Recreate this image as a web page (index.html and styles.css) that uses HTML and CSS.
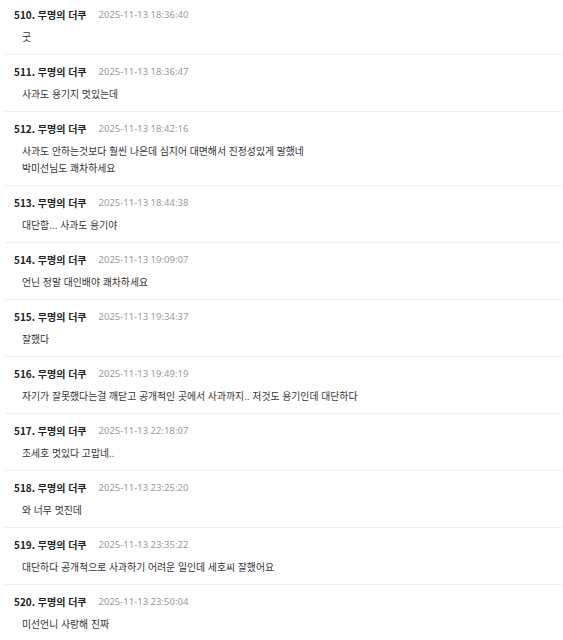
FILE: index.html
```html
<!DOCTYPE html>
<html lang="ko">
<head>
    <meta charset="utf-8">
    <title>댓글</title>
    <link rel="stylesheet" href="styles.css">
</head>
<body>
    <ul class="comments">
        <li class="comment">
            <div class="meta"><span class="author">510. 무명의 더쿠</span><span class="date">2025-11-13 18:36:40</span></div>
            <div class="text">굿</div>
        </li>
        <li class="comment">
            <div class="meta"><span class="author">511. 무명의 더쿠</span><span class="date">2025-11-13 18:36:47</span></div>
            <div class="text">사과도 용기지 멋있는데</div>
        </li>
        <li class="comment">
            <div class="meta"><span class="author">512. 무명의 더쿠</span><span class="date">2025-11-13 18:42:16</span></div>
            <div class="text">사과도 안하는것보다 훨씬 나은데 심지어 대면해서 진정성있게 말했네<br>박미선님도 쾌차하세요</div>
        </li>
        <li class="comment">
            <div class="meta"><span class="author">513. 무명의 더쿠</span><span class="date">2025-11-13 18:44:38</span></div>
            <div class="text">대단함... 사과도 용기야</div>
        </li>
        <li class="comment">
            <div class="meta"><span class="author">514. 무명의 더쿠</span><span class="date">2025-11-13 19:09:07</span></div>
            <div class="text">언닌 정말 대인배야 쾌차하세요</div>
        </li>
        <li class="comment">
            <div class="meta"><span class="author">515. 무명의 더쿠</span><span class="date">2025-11-13 19:34:37</span></div>
            <div class="text">잘했다</div>
        </li>
        <li class="comment">
            <div class="meta"><span class="author">516. 무명의 더쿠</span><span class="date">2025-11-13 19:49:19</span></div>
            <div class="text">자기가 잘못했다는걸 깨닫고 공개적인 곳에서 사과까지.. 저것도 용기인데 대단하다</div>
        </li>
        <li class="comment">
            <div class="meta"><span class="author">517. 무명의 더쿠</span><span class="date">2025-11-13 22:18:07</span></div>
            <div class="text">조세호 멋있다 고맙네..</div>
        </li>
        <li class="comment">
            <div class="meta"><span class="author">518. 무명의 더쿠</span><span class="date">2025-11-13 23:25:20</span></div>
            <div class="text">와 너무 멋진데</div>
        </li>
        <li class="comment">
            <div class="meta"><span class="author">519. 무명의 더쿠</span><span class="date">2025-11-13 23:35:22</span></div>
            <div class="text">대단하다 공개적으로 사과하기 어려운 일인데 세호씨 잘했어요</div>
        </li>
        <li class="comment">
            <div class="meta"><span class="author">520. 무명의 더쿠</span><span class="date">2025-11-13 23:50:04</span></div>
            <div class="text">미선언니 사랑해 진짜</div>
        </li>
    </ul>
</body>
</html>
```

FILE: styles.css
```css
body
{
    margin: 0;
    background-color: #fff;
    font-family: "Noto Sans CJK KR", "Noto Sans", sans-serif;
    color: #333;
}
.comments
{
    list-style: none;
    margin: -2px 1px 0 5px;
    padding: 0;
}
.comment
{
    padding: 9px 0 8px 0;
    border-bottom: 1px solid #efefef;
}
.meta
{
    display: flex;
    align-items: center;
    gap: 12px;
    height: 16px;
    padding-left: 9px;
}
.author
{
    font-size: 10px;
    font-weight: bold;
    line-height: 16px;
    color: #222;
}
.date
{
    font-family: "Noto Sans", "Liberation Sans", sans-serif;
    font-size: 9.5px;
    line-height: 16px;
    color: #999;
}
.text
{
    margin-top: 6px;
    padding-left: 17px;
    font-size: 9.85px;
    line-height: 17px;
    color: #333;
}
```
